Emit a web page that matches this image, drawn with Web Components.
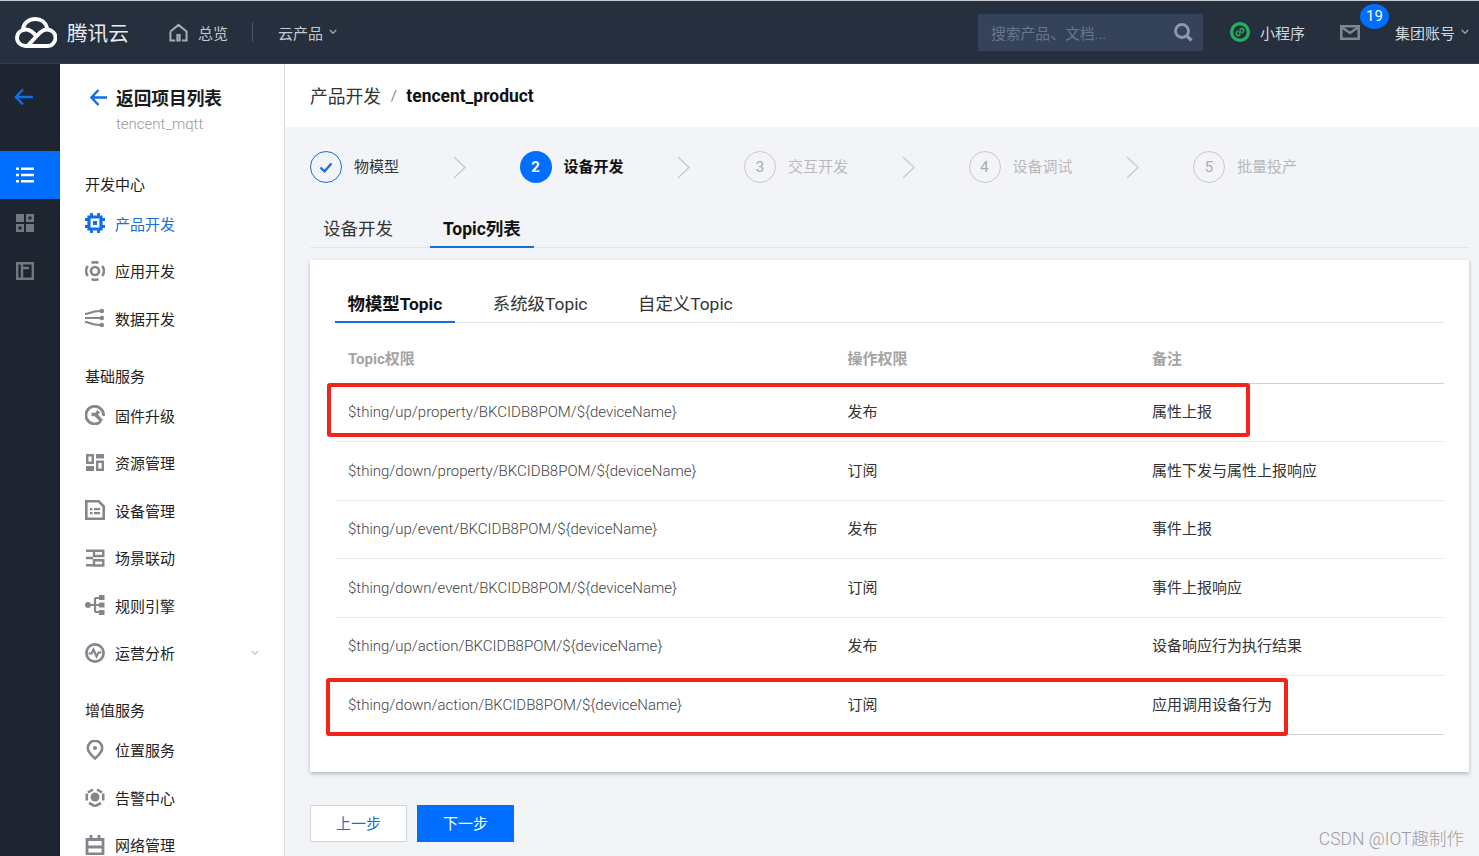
<!DOCTYPE html>
<html lang="zh-CN"><head><meta charset="utf-8"><title>Topic列表</title>
<style>
html,body{margin:0;padding:0;height:856px;overflow:hidden;background:#f2f4f8;font-family:Roboto,"Noto Sans CJK SC",sans-serif;color:#333}
</style></head><body>
<app-shell>
  <top-bar slot="top"></top-bar>
  <side-rail slot="rail"></side-rail>
  <side-nav slot="nav">
    <nav-section label="开发中心" first>
      <nav-item icon="chip" active>产品开发</nav-item>
      <nav-item icon="app">应用开发</nav-item>
      <nav-item icon="data">数据开发</nav-item>
    </nav-section>
    <nav-section label="基础服务">
      <nav-item icon="firmware">固件升级</nav-item>
      <nav-item icon="resource">资源管理</nav-item>
      <nav-item icon="device">设备管理</nav-item>
      <nav-item icon="scene">场景联动</nav-item>
      <nav-item icon="rule">规则引擎</nav-item>
      <nav-item icon="analysis" more>运营分析</nav-item>
    </nav-section>
    <nav-section label="增值服务">
      <nav-item icon="location">位置服务</nav-item>
      <nav-item icon="alarm">告警中心</nav-item>
      <nav-item icon="network">网络管理</nav-item>
    </nav-section>
  </side-nav>
  <page-head><span slot="path">产品开发</span><span slot="name">tencent_product</span></page-head>
  <step-bar>
    <step-item state="done" label="物模型"></step-item>
    <step-item state="active" num="2" label="设备开发"></step-item>
    <step-item state="todo" num="3" label="交互开发"></step-item>
    <step-item state="todo" num="4" label="设备调试"></step-item>
    <step-item state="todo" num="5" label="批量投产" last></step-item>
  </step-bar>
  <outer-tabs><tab-link>设备开发</tab-link><tab-link active>Topic列表</tab-link></outer-tabs>
  <topic-card>
    <inner-tabs slot="tabs"><tab-link inner active>物模型Topic</tab-link><tab-link inner>系统级Topic</tab-link><tab-link inner>自定义Topic</tab-link></inner-tabs>
    <topic-row head a="Topic权限" b="操作权限" c="备注" h="61"></topic-row>
    <topic-row a="$thing/up/property/BKCIDB8POM/${deviceName}" b="发布" c="属性上报" h="58"></topic-row>
    <topic-row a="$thing/down/property/BKCIDB8POM/${deviceName}" b="订阅" c="属性下发与属性上报响应" h="59"></topic-row>
    <topic-row a="$thing/up/event/BKCIDB8POM/${deviceName}" b="发布" c="事件上报" h="58"></topic-row>
    <topic-row a="$thing/down/event/BKCIDB8POM/${deviceName}" b="订阅" c="事件上报响应" h="59"></topic-row>
    <topic-row a="$thing/up/action/BKCIDB8POM/${deviceName}" b="发布" c="设备响应行为执行结果" h="58"></topic-row>
    <topic-row a="$thing/down/action/BKCIDB8POM/${deviceName}" b="订阅" c="应用调用设备行为" h="59"></topic-row>
  </topic-card>
  <button-row><flat-button>上一步</flat-button><flat-button primary>下一步</flat-button></button-row>
  <red-mark style="left:327px;top:383px;width:923px;height:54px"></red-mark>
  <red-mark style="left:326px;top:678px;width:962px;height:58px"></red-mark>
  <water-mark>CSDN @IOT趣制作</water-mark>
</app-shell>
<script>
const G='#83878d';
const ICONS={
 chip:`<path d="M4 4h12v12H4z" fill="none" stroke="currentColor" stroke-width="3.200"/><rect x="8" y="8" width="4" height="4" fill="currentColor"/><path d="M6.500 0v3M13.500 0v3M6.500 17v3M13.500 17v3M0 6.500h3M0 13.500h3M17 6.500h3M17 13.500h3" stroke="currentColor" stroke-width="2.800"/>`,
 app:`<circle cx="10" cy="10" r="4" fill="none" stroke="currentColor" stroke-width="2.700"/><path d="M6.500 1.930A8.800 8.800 0 0 1 13.500 1.930M6.500 18.070A8.800 8.800 0 0 0 13.500 18.070M2.760 5A8.800 8.800 0 0 0 2.760 15M17.240 5A8.800 8.800 0 0 1 17.240 15" fill="none" stroke="currentColor" stroke-width="2.500"/>`,
 data:`<path d="M0 6c4 0 6-3 15-3M0 10h15M0 14c4 0 6 3 15 3" fill="none" stroke="currentColor" stroke-width="2.200"/><circle cx="16.800" cy="3" r="2.300" fill="currentColor"/><circle cx="16.800" cy="10" r="2.300" fill="currentColor"/><circle cx="16.800" cy="17" r="2.300" fill="currentColor"/>`,
 firmware:`<path d="M15.500 16.800A8.800 8.800 0 1 1 18.500 11" fill="none" stroke="currentColor" stroke-width="2.800"/><path d="M6.500 9.500H11L13.800 6.200M10.500 9.500L16.800 16.200" fill="none" stroke="currentColor" stroke-width="3.400"/>`,
 resource:`<path d="M2.200 2.200h5.600v7.600H2.200z" fill="none" stroke="currentColor" stroke-width="2.400"/><rect x="1" y="13" width="8" height="5" fill="currentColor"/><rect x="11" y="1" width="8" height="4.500" fill="currentColor"/><path d="M12.200 8.700h5.600V16.800h-5.600z" fill="none" stroke="currentColor" stroke-width="2.400"/>`,
 device:`<path d="M1.300 1.300h12.400l5 5v12.400H1.300z" fill="none" stroke="currentColor" stroke-width="2.600"/><path d="M5 8h2.500v2.300H5zM9 8h6v2.300H9zM5 12h2.500v2.300H5zM9 12h6v2.300H9z" fill="currentColor"/>`,
 scene:`<path d="M1 1.500h7v2.400H1zM1 8.800h7v2.400H1zM1 16.100h7v2.400H1z" fill="currentColor"/><path d="M9 2.700h9.300v5.300H9zM9 12.200h9.300v5.300H9z" fill="none" stroke="currentColor" stroke-width="2.400"/>`,
 rule:`<circle cx="3" cy="10" r="3" fill="currentColor"/><path d="M3 10h12M10 3v14M10 3h4M10 17h4" fill="none" stroke="currentColor" stroke-width="2.200"/><path d="M14 0h5.500v5H14zM14 7.500h5.500v5H14zM14 15h5.500v5H14z" fill="currentColor"/>`,
 analysis:`<circle cx="10" cy="10" r="8.600" fill="none" stroke="currentColor" stroke-width="2.700"/><path d="M3.500 10.500h3l2-4 3 7 2-4h3" fill="none" stroke="currentColor" stroke-width="2.200"/>`,
 location:`<path d="M10 18.500C6 15 2.800 11.500 2.800 8a7.200 7.200 0 0 1 14.400 0c0 3.500-3.200 7-7.200 10.500z" fill="none" stroke="currentColor" stroke-width="2.600"/><circle cx="10" cy="8" r="2" fill="currentColor"/>`,
 alarm:`<path d="M3 5.500L8 2.500M17 5.500L12 2.500M1.800 6.500v7M18.200 6.500v7M4 16l6 3.200 6-3.200" fill="none" stroke="currentColor" stroke-width="2.600"/><circle cx="10" cy="10" r="4.500" fill="currentColor"/>`,
 network:`<path d="M2 4.500h16V19H2z" fill="none" stroke="currentColor" stroke-width="2.800"/><path d="M6 0v5M14 0v5M2 12h16" stroke="currentColor" stroke-width="2.800"/>`,
 list:`<path d="M0 1.500h3v2.400H0zM0 7.800h3v2.400H0zM0 14.100h3v2.400H0zM5 1.500h13v2.400H5zM5 7.800h13v2.400H5zM5 14.100h13v2.400H5z" fill="currentColor"/>`,
 grid:`<path fill-rule="evenodd" d="M0 0h8v8H0zM10 0h8v8h-8zM12.500 2.500v3h3v-3zM0 10h8v8H0zM2.500 12.500v3h3v-3zM10 10h8v8h-8z" fill="currentColor"/>`,
 panel:`<path d="M1.200 1.200h15.600v15.600H1.200z" fill="none" stroke="currentColor" stroke-width="2.400"/><path d="M6 2v15M6 6h7" fill="none" stroke="currentColor" stroke-width="2.400"/>`
};
function def(name,css,html,extra){
  const t=document.createElement('template');t.innerHTML=`<style>${css}</style>${html}`;
  customElements.define(name,class extends HTMLElement{
    constructor(){super();this.attachShadow({mode:'open'}).appendChild(t.content.cloneNode(true));}
    connectedCallback(){if(extra)extra.call(this,this.shadowRoot);}
  });
}
const svg=(n,w,h,vb)=>`<svg width="${w}" height="${h}" viewBox="0 0 ${vb} ${vb}">${ICONS[n]}</svg>`;

def('app-shell',`:host{display:grid;grid-template-columns:60px 225px 1fr;grid-template-rows:64px 792px;width:1479px;height:856px;overflow:hidden;position:relative}
 .top{grid-column:1/4}.main{display:flex;flex-direction:column;min-width:0}`,
 `<div class="top"><slot name="top"></slot></div><slot name="rail"></slot><slot name="nav"></slot><div class="main"><slot></slot></div>`);

def('top-bar',`:host{display:flex;align-items:center;background:#262f3e;border-top:1px solid #c8ccd2;box-sizing:content-box;height:62px;border-bottom:1px solid #343d4c;color:#c5cad2;font-size:15px;letter-spacing:0}
 .logo{margin-left:15px;display:flex;align-items:center}.brand{font-size:20.600px;color:#e9ebee;margin-left:10px;width:62px;white-space:nowrap}
 .home{margin-left:40px;display:flex}.t{margin-left:10px}.sep{width:1px;height:20px;background:#4b5563;margin:0 25px 0 24px}
 .ch{margin-left:6px;display:flex}.sp{flex:1}
 .search{width:225px;height:37px;background:#344359;display:flex;align-items:center;box-sizing:border-box;padding:0 10px 0 13px;color:#68778c;font-size:14.800px;justify-content:space-between;margin-right:27px}
 .mini{display:flex;margin-right:10px}.mail{display:flex;margin-left:35px;position:relative}
 .badge{position:absolute;left:20px;top:-21px;width:29px;height:25px;border-radius:50%;background:#006eff;color:#fff;font-size:15px;display:flex;align-items:center;justify-content:center}
 .acct{margin-left:35px}.end{margin-right:10px}`,
 `<span class="logo"><svg width="42" height="31" viewBox="0 0 42 31"><g fill="none" stroke="#fff" stroke-width="3.800" stroke-linecap="round" stroke-linejoin="round"><path d="M8 12.500C8.500 6 14 2 20.500 2 26 2 30.500 5.500 32 10.500"/><path d="M21.500 19.500C18.500 15.500 15 12.500 11 12.500 6 12.500 2 16 2 21 2 25.500 6 29 10.500 29H32.500C37 29 40.500 25 40.500 20.500 40.500 16 36.500 12.500 32 12.500 27 12.500 24.500 16 12.500 29"/></g></svg></span>
 <span class="brand">腾讯云</span>
 <span class="home"><svg width="19" height="19" viewBox="0 0 20 19"><path d="M1.500 8.500L10 1.500l8.500 7V18H13.500M6.500 18H1.500V8.500M8.800 12h2.400v6H8.800z" fill="none" stroke="#a6acb6" stroke-width="2.100"/></svg></span><span class="t">总览</span>
 <span class="sep"></span><span>云产品</span>
 <span class="ch"><svg width="8" height="6" viewBox="0 0 8 6"><path d="M.8 1l3.200 3.200L7.200 1" fill="none" stroke="#98a0ac" stroke-width="1.500"/></svg></span>
 <span class="sp"></span>
 <span class="search"><span>搜索产品、文档...</span><svg width="20" height="20" viewBox="0 0 20 20"><circle cx="9" cy="9" r="6.500" fill="none" stroke="#8f99a6" stroke-width="2.800"/><path d="M13.500 13.500l5 5" stroke="#8f99a6" stroke-width="3.200"/></svg></span>
 <span class="mini"><svg width="20" height="20" viewBox="0 0 20 20"><circle cx="10" cy="10" r="10" fill="#1fb45c"/><circle cx="10" cy="10" r="6.800" fill="#262f3e"/><path d="M6.300 11.500c0 2.800 3.700 3 3.700 0V8.500c.2-2.900 3.700-2.700 3.700 0 0 1.600-1.200 2.200-2.200 2.100M8.300 9.200c-1.100-.1-2 .9-2 2.300" fill="none" stroke="#1fb45c" stroke-width="1.500"/></svg></span><span style="color:#d5d8dd">小程序</span>
 <span class="mail"><svg width="20" height="15" viewBox="0 0 20 15"><path d="M1.300 1.300h17.400v12.400H1.300z" fill="none" stroke="#7d858f" stroke-width="2.600"/><path d="M1.500 2L10 8l8.500-6" fill="none" stroke="#7d858f" stroke-width="2.400"/></svg><span class="badge">19</span></span>
 <span class="acct" style="color:#d5d8dd">集团账号</span><span class="ch end"><svg width="8" height="6" viewBox="0 0 8 6"><path d="M.8 1l3.200 3.200L7.200 1" fill="none" stroke="#98a0ac" stroke-width="1.500"/></svg></span>`);

def('side-rail',`:host{display:flex;flex-direction:column;width:60px;background:#1e2430;color:#727882}
 .back{display:flex;align-items:center;padding-left:14px;box-sizing:border-box}
 .i{height:48px;display:flex;align-items:center;justify-content:center;padding-right:10px;box-sizing:border-box}
 .i.a{background:#006eff;color:#fff}`,
 `<div class="back" style="height:66px"><svg width="20" height="18" viewBox="0 0 20 18"><path d="M19 9H2M9 1.500L1.800 9 9 16.500" fill="none" stroke="#0f6fe8" stroke-width="2.400"/></svg></div><div style="height:21px"></div>
 <div class="i a">${svg('list',18,18,18)}</div><div class="i">${svg('grid',18,18,18)}</div><div class="i">${svg('panel',18,18,18)}</div>`);

def('side-nav',`:host{display:block;width:225px;box-sizing:border-box;background:#fff;border-right:1px solid #d9dbde;overflow:hidden}
 .h{display:flex;align-items:center;margin:20px 0 0 30px;height:26px;font-size:17.670px;font-weight:700;color:#1c1c1c;white-space:nowrap}
 .h svg{margin-right:9px}
 .s{margin:4px 0 0 56px;font-size:15px;font-weight:300;color:#999;line-height:20px;height:20px}`,
 `<div class="h"><svg width="17" height="17" viewBox="0 0 17 17"><path d="M17 8.500H2M8.500 1L1.500 8.500 8.500 16" fill="none" stroke="#0f6fe8" stroke-width="2.400"/></svg>返回项目列表</div><div class="s">tencent_mqtt</div><slot></slot>`);

def('nav-section',`:host{display:block}.l{padding:21.750px 0 0 25px;height:27.750px;line-height:26.500px;font-size:15px;color:#1c1c1c}
 :host([first]) .l{padding-top:38px;height:27.500px}`,
 `<div class="l"></div><slot></slot>`,function(r){r.querySelector('.l').textContent=this.getAttribute('label');});

def('nav-item',`:host{display:flex;align-items:center;height:47.500px;padding-left:25px;font-size:15px;color:#222;position:relative}
 :host([active]){color:#1a6fd6}.ic{width:20px;height:20px;display:flex;color:${G};margin-right:10px}
 :host([active]) .ic{color:#0f6fe8}.m{position:absolute;right:25px;top:21px;display:none}:host([more]) .m{display:flex}`,
 `<span class="ic"></span><slot></slot><span class="m"><svg width="8" height="6" viewBox="0 0 8 6"><path d="M.8 1l3.200 3.200L7.200 1" fill="none" stroke="#c6c8cb" stroke-width="1.400"/></svg></span>`,
 function(r){r.querySelector('.ic').innerHTML=svg(this.getAttribute('icon'),20,20,20);});

def('page-head',`:host{display:flex;align-items:center;height:63px;background:#fff;padding-left:25px;color:#333;white-space:nowrap}
 .d{margin:0 9.500px;color:#888;font-size:15px}.n{font-weight:700;color:#111;font-size:17.450px}.p{font-size:17.800px;margin-bottom:2px}`,
 `<span class="p"><slot name="path"></slot></span><span class="d">/</span><span class="n"><slot name="name"></slot></span>`);

def('step-bar',`:host{display:flex;align-items:center;height:80px;padding-left:25px}`,`<slot></slot>`);

def('step-item',`:host{display:flex;align-items:center;font-size:15px;color:#333;white-space:nowrap}
 .c{width:32px;height:32px;box-sizing:border-box;border-radius:50%;display:flex;align-items:center;justify-content:center;font-size:15px;margin-right:12px}
 .t{margin-bottom:3px}
 :host([state=done]) .c{border:1.500px solid #1a6fd6}
 :host([state=active]) .c{background:#006eff;color:#fff;font-weight:700}
 :host([state=active]) .t{font-weight:700;color:#111}
 :host([state=todo]) .c{border:1.500px solid #c9c9cc;color:#aaa}
 :host([state=todo]) .t{color:#b9b9bb}
 .a{display:flex;margin:0 53.750px}:host([last]) .a{display:none}`,
 `<span class="c"></span><span class="t"></span><span class="a"><svg width="13" height="23" viewBox="0 0 13 23"><path d="M1 1l11 10.500L1 22" fill="none" stroke="#c4c6ca" stroke-width="1.200"/></svg></span>`,
 function(r){r.querySelector('.t').textContent=this.getAttribute('label');
  r.querySelector('.c').innerHTML=this.getAttribute('state')==='done'?`<svg width="14" height="11" viewBox="0 0 14 11"><path d="M1.500 5.500l4 3.800L12.500 1.500" fill="none" stroke="#1a6fd6" stroke-width="2.300"/></svg>`:this.getAttribute('num');});

def('outer-tabs',`:host{display:flex;gap:24px;margin:0 10px 0 25px;height:41px;box-shadow:inset 0 -1px 0 #e3e5ea}`,`<slot></slot>`);
def('inner-tabs',`:host{display:flex;gap:25.500px;height:40px;box-shadow:inset 0 -1px 0 #e3e5ea}`,`<slot></slot>`);

def('tab-link',`:host{display:block;padding:0 13px;font-size:17.500px;line-height:44px;height:41px;box-sizing:border-box;color:#333;white-space:nowrap}
 :host([inner]){padding:0 12.500px;font-size:17.400px;line-height:42px;height:40px}
 :host([active]){font-weight:700;color:#111;border-bottom:2px solid #1a6fd6}`,`<slot></slot>`);

def('topic-card',`:host{display:block;height:512px;box-sizing:border-box;margin:12px 10px 33px 25px;padding:23px 25px 0;background:#fff;box-shadow:0 2px 4px rgba(54,58,80,.32)}`,
 `<slot name="tabs"></slot><slot></slot>`);

def('topic-row',`:host{display:grid;grid-template-columns:499.500px 304.500px 1fr;align-items:center;box-sizing:border-box;padding:0 0 2px 13px;font-size:15px;line-height:20px;color:#444;border-bottom:1px solid #e6e8ec;white-space:nowrap}
 :host([h="59"]){padding-bottom:1px}
 :host([head]){font-weight:700;color:#a3a3a3;border-bottom-color:#cfd2d8;padding-top:12px;padding-bottom:0}
 .a{font-weight:300}:host([head]) .a{font-weight:700}
 .c,.b{color:#333}:host([head]) .c,:host([head]) .b{color:#a3a3a3}`,
 `<span class="a"></span><span class="b"></span><span class="c"></span>`,
 function(r){for(const k of 'abc')r.querySelector('.'+k).textContent=this.getAttribute(k);this.style.height=this.getAttribute('h')+'px';
   if(!this.nextElementSibling||this.nextElementSibling.tagName!=='TOPIC-ROW')this.style.borderBottomColor='#cfd2d8';});

def('button-row',`:host{display:flex;gap:10px;padding-left:25px}`,`<slot></slot>`);
def('flat-button',`:host{display:flex;align-items:center;justify-content:center;width:97px;height:37px;box-sizing:border-box;border:1px solid #cfd5de;background:#fff;color:#1a6fd6;font-size:15px;padding-bottom:3px}
 :host([primary]){background:#006eff;border-color:#006eff;color:#fff}`,`<slot></slot>`);

def('red-mark',`:host{position:absolute;box-sizing:border-box;border:4px solid #f3231a;border-radius:3px;pointer-events:none}`,``);
def('water-mark',`:host{position:absolute;right:15px;bottom:6px;font-size:17.500px;font-weight:300;color:#9c9ea3;white-space:nowrap}`,`<slot></slot>`);
</script>
</body></html>
